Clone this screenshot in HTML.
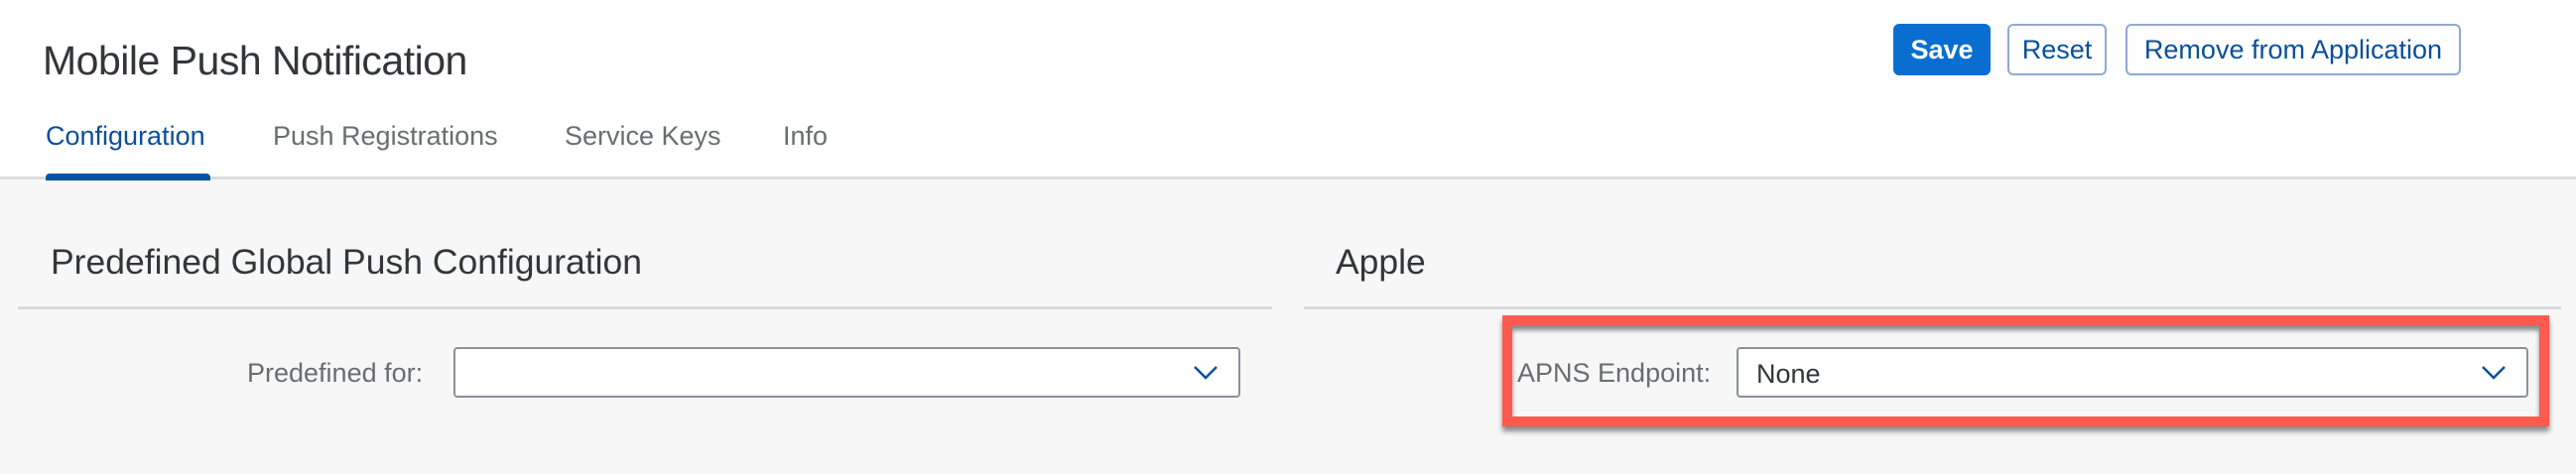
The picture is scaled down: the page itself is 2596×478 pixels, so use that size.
<!DOCTYPE html>
<html><head><meta charset="utf-8"><style>
*{margin:0;padding:0;box-sizing:border-box}
body{width:2596px;height:478px;overflow:hidden;background:#f7f7f7;font-family:"Liberation Sans",Arial,sans-serif;position:relative}
.abs{position:absolute;white-space:nowrap}
#hdr{position:absolute;left:0;top:0;width:2596px;height:181px;background:#fff;border-bottom:3px solid #dcdcdc}
.title{left:43px;top:38px;font-size:41px;color:#32363a;letter-spacing:-0.5px}
.tab{top:122px;font-size:27px;color:#6a6d70}
.btn{top:24px;height:52px;border-radius:6px;font-size:27px;line-height:48px;text-align:center;border:2px solid #8fa9d4;color:#0a4f9a;background:#fff}
.sec{top:244px;font-size:35.5px;color:#32363a}
.sep{height:3px;background:#dadada;top:309px}
.lbl{top:361px;font-size:27px;color:#6a6d70}
.sel{top:350px;height:51px;background:#fff;border:2px solid #89919a;border-radius:4px}
.chev{position:absolute;right:20px;top:16px}
</style></head><body>
<div id="hdr"></div>
<div class="abs title">Mobile Push Notification</div>
<div class="abs tab" style="left:46px;color:#0a4f9a">Configuration</div>
<div class="abs" style="left:46px;top:175px;width:166px;height:7px;background:#0854a0;border-radius:4px 4px 0 0"></div>
<div class="abs tab" style="left:275px">Push Registrations</div>
<div class="abs tab" style="left:569px">Service Keys</div>
<div class="abs tab" style="left:789px">Info</div>

<div class="abs btn" style="left:1908px;width:98px;background:#0a6ed1;border-color:#0a6ed1;color:#fff;font-weight:bold">Save</div>
<div class="abs btn" style="left:2023px;width:100px">Reset</div>
<div class="abs btn" style="left:2142px;width:338px">Remove from Application</div>

<div class="abs sec" style="left:51px">Predefined Global Push Configuration</div>
<div class="abs sep" style="left:18px;width:1264px"></div>
<div class="abs lbl" style="left:249px">Predefined for:</div>
<div class="abs sel" style="left:457px;width:793px"><svg class="chev" width="26" height="16" viewBox="0 0 26 16"><path d="M2 2 L13 13 L24 2" fill="none" stroke="#0a4f9a" stroke-width="2.5"/></svg></div>

<div class="abs sec" style="left:1346px">Apple</div>
<div class="abs sep" style="left:1314px;width:1267px"></div>
<div class="abs" style="left:1514px;top:318px;width:1055px;height:112px;border:10px solid #ff5a4f;box-shadow:0 5px 5px rgba(0,0,0,0.45), inset 0 5px 5px rgba(0,0,0,0.45)"></div>
<div class="abs lbl" style="left:1529px;color:#6a6d70">APNS Endpoint:</div>
<div class="abs sel" style="left:1750px;width:798px"><span style="position:absolute;left:18px;top:10px;font-size:27px;color:#32363a">None</span><svg class="chev" width="26" height="16" viewBox="0 0 26 16"><path d="M2 2 L13 13 L24 2" fill="none" stroke="#0a4f9a" stroke-width="2.5"/></svg></div>
</body></html>
